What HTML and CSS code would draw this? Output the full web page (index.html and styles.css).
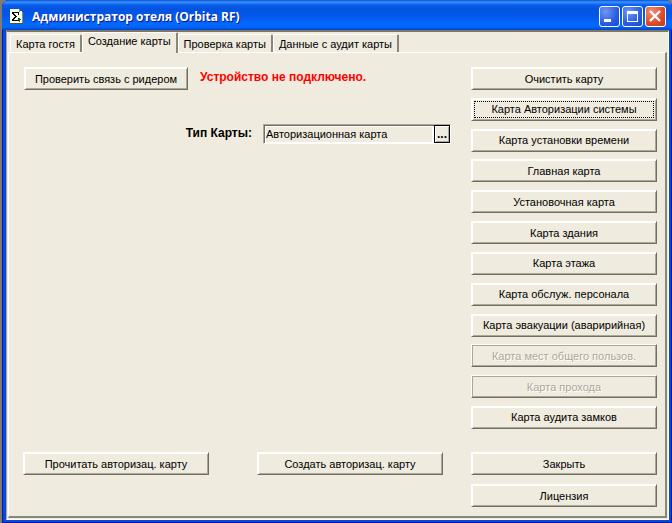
FILE: index.html
```html
<!DOCTYPE html>
<html lang="ru">
<head>
  <meta charset="UTF-8">
  <meta name="viewport" content="width=device-width, initial-scale=1.0">
  <title>Администратор отеля (Orbita RF)</title>
  <link rel="stylesheet" href="styles.css">
</head>
<body>
  <div class="window">
    <header class="titlebar">
      <svg class="app-icon" width="13" height="15" viewBox="0 0 13 15" shape-rendering="crispEdges">
        <path d="M0 0h10v2h2v12H0z" fill="#fffff0"/>
        <path d="M10 0v3h3v11h-1V3H9V0z" fill="#8c8c60"/>
        <path d="M0 14h13v1H0z" fill="#55552a"/>
        <path d="M2 3h7v3H8V4H4v1h1v1h1v1h1v1H6v1H5v1H4v1h4V9h1v3H2v-2h1V9h1V8h1V7H4V6H3V5H2z" fill="#000"/>
        <path d="M9 9h1v1h1v1h-1v2H9v-2H8v-1h1z" fill="#008000"/>
      </svg>
      <h1 class="title">Администратор отеля (Orbita RF)</h1>
      <div class="window-controls">
        <button type="button" class="control" aria-label="Свернуть">
          <svg width="19" height="19" viewBox="0 0 19 19"><path d="M4 12h7v3H4z" fill="#fff"/></svg>
        </button>
        <button type="button" class="control" aria-label="Развернуть">
          <svg width="19" height="19" viewBox="0 0 19 19"><path d="M4 4h11v11H4zM5 7v7h9V7z" fill="#fff" fill-rule="evenodd"/></svg>
        </button>
        <button type="button" class="control control-close" aria-label="Закрыть окно">
          <svg width="19" height="19" viewBox="0 0 19 19"><path d="M4 4l10 10M14 4l-10 10" stroke="#fff" stroke-width="2.3"/></svg>
        </button>
      </div>
    </header>

    <main class="client">
      <nav class="tabs" role="tablist">
        <button type="button" class="tab" role="tab">Карта гостя</button>
        <button type="button" class="tab active" role="tab" aria-selected="true">Создание карты</button>
        <button type="button" class="tab" role="tab">Проверка карты</button>
        <button type="button" class="tab" role="tab">Данные с аудит карты</button>
      </nav>

      <div class="panel">
        <form class="card-form">
          <div class="reader">
            <button type="button" class="btn btn-reader">Проверить связь с ридером</button>
            <span class="status">Устройство не подключено.</span>
          </div>
          <div class="card-type">
            <label for="cardType">Тип Карты:</label>
            <div class="field">
              <input type="text" id="cardType" value="Авторизационная карта" readonly>
              <button type="button" class="browse">...</button>
            </div>
          </div>
          <div class="form-actions">
            <button type="button" class="btn btn-wide">Прочитать авторизац. карту</button>
            <button type="button" class="btn btn-wide">Создать авторизац. карту</button>
          </div>
        </form>

        <aside class="side">
          <div class="card-list">
            <button type="button" class="btn">Очистить карту</button>
            <button type="button" class="btn focused">Карта Авторизации системы</button>
            <button type="button" class="btn">Карта установки времени</button>
            <button type="button" class="btn">Главная карта</button>
            <button type="button" class="btn">Установочная карта</button>
            <button type="button" class="btn">Карта здания</button>
            <button type="button" class="btn">Карта этажа</button>
            <button type="button" class="btn">Карта обслуж. персонала</button>
            <button type="button" class="btn">Карта эвакуации (аваририйная)</button>
            <button type="button" class="btn" disabled>Карта мест общего пользов.</button>
            <button type="button" class="btn" disabled>Карта прохода</button>
            <button type="button" class="btn">Карта аудита замков</button>
          </div>
          <div class="app-actions">
            <button type="button" class="btn">Закрыть</button>
            <button type="button" class="btn">Лицензия</button>
          </div>
        </aside>
      </div>
    </main>
  </div>
</body>
</html>
```
FILE: styles.css
```css
* { box-sizing: border-box; }
body { margin: 0; padding-left: 2px; background: #7f7c73; font-family: "Liberation Sans", Arial, sans-serif; font-size: 11px; line-height: 15px; color: #000; }
button, input { font: inherit; color: inherit; margin: 0; }

.window { display: flex; flex-direction: column; min-height: 100vh; padding: 0 3px 3px 4px; background: #0a48dc; border-radius: 7px 7px 0 0; box-shadow: inset 1px 0 #0019a8, inset -1px -1px #0019a8; }

/* title bar */
.titlebar { display: flex; align-items: center; height: 30px; margin: 0 -3px 0 -4px; padding: 3px 6px 0 8px; border-radius: 7px 7px 0 0; background: linear-gradient(#0a4fd0 0, #3a93ff 2px, #0a5fee 5px, #0253e0 9px, #0458ea 16px, #0268ff 24px, #0265fa 27px, #0044c8 30px); }
.app-icon { flex: none; }
.title { flex: 1; margin: 0 0 0 9px; font-family: "Open Sans", "Noto Sans", sans-serif; font-size: 12px; line-height: 18px; font-weight: bold; color: #fff; text-shadow: 1px 1px #0a1883; }
.window-controls { display: flex; gap: 2px; }
.control { width: 21px; height: 21px; padding: 0; border: 1px solid #fff; border-radius: 3px; background: radial-gradient(circle at 30% 25%, #6f97f5, #2a5ce0 60%, #1c48c8); }
.control svg { display: block; }
.control-close { background: radial-gradient(circle at 30% 25%, #f0907a, #dc4a28 60%, #c03a18); }

/* client area */
.client { flex: 1; display: flex; flex-direction: column; padding: 0 1px 1px; background: #efebde; border: 1px solid #fff; border-top: 2px solid #7b786b; border-left-color: #aca899; }
.tabs { display: flex; align-items: flex-end; height: 20px; padding-left: 2px; }
.tab { height: 18px; padding: 1px 5px 0; border: 1px solid #fff; border-right: 2px solid #8a8777; border-bottom: 0; border-radius: 2px 2px 0 0; background: #efebde; white-space: nowrap; }
.tab.active { height: 21px; margin-bottom: -1px; padding-bottom: 4px; position: relative; }

.panel { flex: 1; display: flex; justify-content: space-between; gap: 20px; padding: 14px 8px 9px 14px; border: 1px solid #fff; border-right: 2px solid #8a8777; border-bottom: 2px solid #8a8777; }

/* buttons */
.btn { height: 23px; padding: 1px 4px 0; border: 1px solid; border-color: #fff #716f64 #716f64 #fff; background: #efebde; box-shadow: inset 1px 1px #fff, inset -1px -1px #aca899; white-space: nowrap; }
.btn.focused { outline: 1px dotted #000; outline-offset: -4px; }
.btn:disabled { color: #aca899; text-shadow: 1px 1px #fff; box-shadow: inset 1px 1px #aca899, inset -1px -1px #aca899; }
.btn-reader { width: 164px; }
.btn-wide { width: 186px; }

.card-form { flex: 1; display: flex; flex-direction: column; padding-bottom: 32px; }
.reader { display: flex; align-items: center; gap: 12px; padding-left: 1px; }
.status { padding-bottom: 3px; font-size: 12px; font-weight: bold; color: #f00; white-space: nowrap; }
.card-type { display: flex; align-items: center; justify-content: flex-end; gap: 11px; margin-top: 34px; }
.card-type label { padding-bottom: 1px; font-size: 12px; font-weight: bold; }
.field { display: flex; width: 188px; height: 20px; border: 1px solid; border-color: #aca899 #fff #fff #aca899; box-shadow: inset 1px 1px #716f64; }
.field input { flex: 1; min-width: 0; margin: 1px 0 0 1px; padding: 0; border: 1px solid #fff; border-right-width: 2px; background: transparent; outline: 0; }
.browse { width: 16px; padding: 0; border: 1px solid #000; background: #efebde; box-shadow: inset 1px 1px #fff, inset -1px -1px #aca899; font-size: 12px; font-weight: bold; line-height: 12px; }
.form-actions { display: flex; gap: 48px; margin-top: auto; }

.side { flex: none; width: 186px; display: flex; flex-direction: column; gap: 23px; }
.card-list { flex: 1; display: flex; flex-direction: column; justify-content: space-between; }
.app-actions { display: flex; flex-direction: column; gap: 9px; }
```
